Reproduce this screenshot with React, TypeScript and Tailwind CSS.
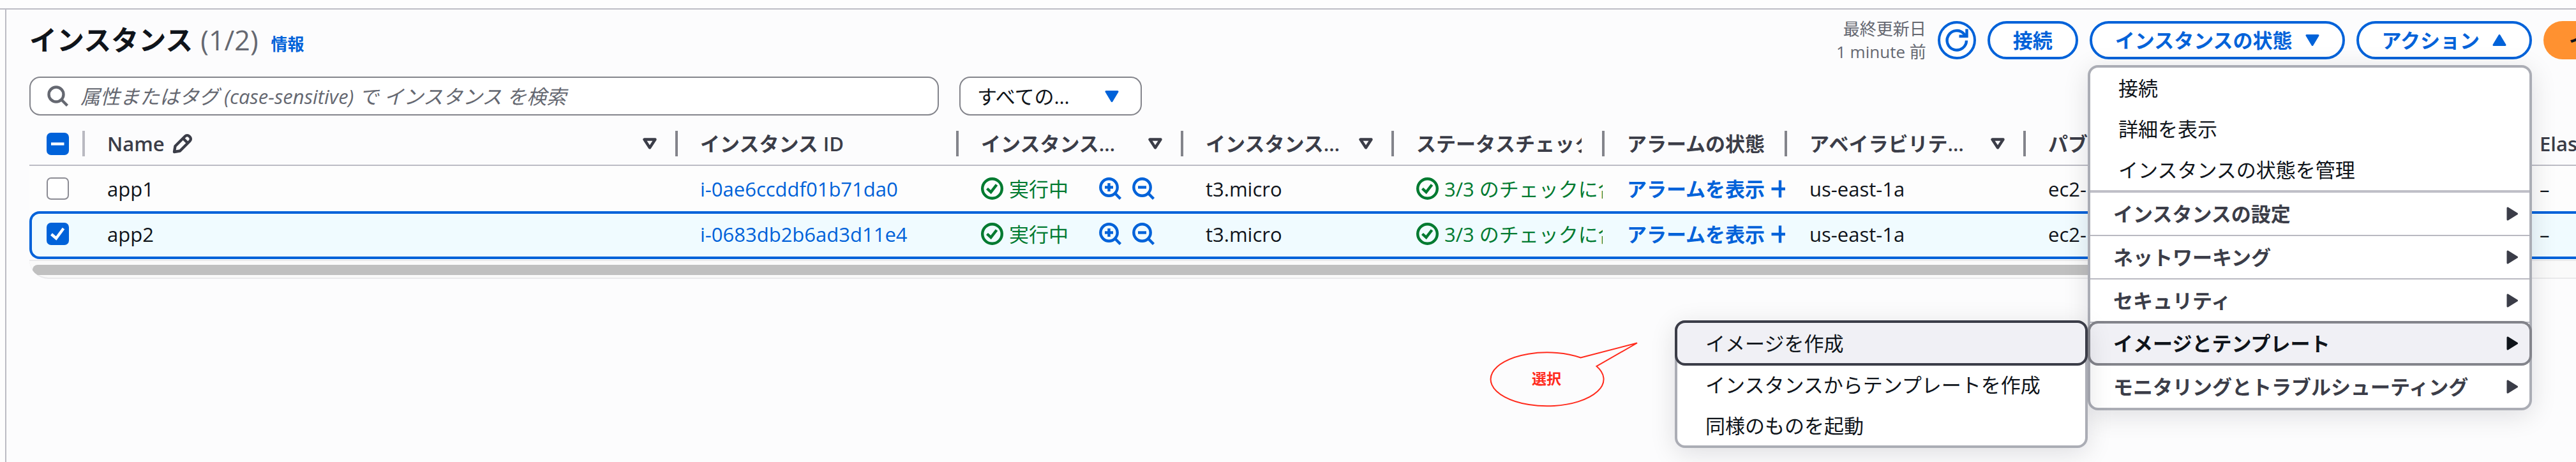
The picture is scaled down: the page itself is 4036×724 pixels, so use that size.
import type { ReactNode } from "react";

const instances = [
  { name: "app1", id: "i-0ae6ccddf01b71da0", selected: false },
  { name: "app2", id: "i-0683db2b6ad3d11e4", selected: true },
];

type Column = { label: string; width: string; filter?: boolean; edit?: boolean; last?: boolean };

const columns: Column[] = [
  { label: "Name", width: "", filter: true, edit: true },
  { label: "インスタンス ID", width: "w-[440px]" },
  { label: "インスタンス…", width: "w-[352px]", filter: true },
  { label: "インスタンス…", width: "w-[330px]", filter: true },
  { label: "ステータスチェック", width: "w-[330px]" },
  { label: "アラームの状態", width: "w-[286px]" },
  { label: "アベイラビリテ…", width: "w-[374px]", filter: true },
  { label: "パブ", width: "w-[770px]" },
  { label: "Elastic IP", width: "w-[92px]", last: true },
];

function Triangle({ className }: { className: string }) {
  return (
    <svg viewBox="0 0 22 18" className={className} aria-hidden="true">
      <path d="M2 1.5h18L11 16.5z" fill="currentColor" stroke="currentColor" strokeWidth="3" strokeLinejoin="round" />
    </svg>
  );
}

function FilterTriangle() {
  return (
    <svg viewBox="0 0 22 18" className="h-[18px] w-[22px]" aria-hidden="true">
      <path d="M2.5 2.5h17L11 15.5z" fill="none" stroke="currentColor" strokeWidth="4.4" strokeLinejoin="round" />
    </svg>
  );
}

function Pencil() {
  return (
    <svg viewBox="0 0 32 32" className="h-8 w-8" fill="none" stroke="currentColor" strokeWidth="4.4" strokeLinejoin="round" aria-hidden="true">
      <path d="M3 29l1.5-9L20 4.500a4.500 4.500 0 0 1 6.500 0l1 1a4.500 4.500 0 0 1 0 6.500L12 27.500z" />
      <path d="M17 8l7.500 7.500" />
    </svg>
  );
}

function StatusOk() {
  return (
    <svg viewBox="0 0 35 35" className="h-[35px] w-[35px] shrink-0" fill="none" stroke="currentColor" strokeWidth="4.400" aria-hidden="true">
      <circle cx="17.500" cy="17.500" r="15.300" />
      <path d="M9.500 17.500l6 5.500 9-11.500" />
    </svg>
  );
}

function Zoom({ plus }: { plus?: boolean }) {
  return (
    <svg viewBox="0 0 35 35" className="h-[35px] w-[35px]" fill="none" stroke="currentColor" strokeWidth="4.400" aria-hidden="true">
      <circle cx="15.500" cy="15.500" r="13.200" />
      <path d="M25 25l8.500 8.500" />
      <path d="M9 15.500h13" />
      {plus && <path d="M15.500 9v13" />}
    </svg>
  );
}

function Checkbox({ label, state }: { label: string; state: "on" | "off" | "mixed" }) {
  return (
    <span className="grid h-[35px] w-[35px]">
      <input
        type="checkbox"
        aria-label={label}
        defaultChecked={state !== "off"}
        className="col-start-1 row-start-1 h-[35px] w-[35px] appearance-none rounded-[7px] border-2 border-[#8c8c94] bg-white checked:border-[#0062d9] checked:bg-[#0062d9]"
      />
      {state !== "off" && (
        <svg viewBox="0 0 35 35" className="pointer-events-none z-10 col-start-1 row-start-1 h-[35px] w-[35px]" fill="none" stroke="#ffffff" strokeWidth="4.400" aria-hidden="true">
          {state === "mixed" ? <path d="M7 17.500h20.500" /> : <path d="M7.500 18l7.500 6.500L26.500 9" />}
        </svg>
      )}
    </span>
  );
}

function Cell({ children, selected }: { children: ReactNode; selected: boolean }) {
  return (
    <td className={selected ? "border-y-4 border-[#0062d9] p-0 pb-1" : "p-0"}>
      <div className="mr-[3px] flex h-[63px] items-center overflow-hidden pl-[35px] whitespace-nowrap">{children}</div>
    </td>
  );
}

const pill =
  "flex h-[60px] items-center gap-5 whitespace-nowrap rounded-full border-4 border-[#0062d9] bg-white px-9 font-semibold text-[#0062d9]";

function MenuGroup({ label }: { label: string }) {
  return (
    <li className="border-b-2 border-[#b9b9c1] last:border-b-0">
      <button type="button" className="flex h-[66px] w-full items-center justify-between pr-[18px] pl-9 font-semibold text-[#3b3d48]">
        {label}
        <Arrow />
      </button>
    </li>
  );
}

function Arrow() {
  return (
    <svg viewBox="0 0 18 22" className="h-[22px] w-[18px] shrink-0" aria-hidden="true">
      <path d="M2 2v18L16.500 11z" fill="currentColor" stroke="currentColor" strokeWidth="3" strokeLinejoin="round" />
    </svg>
  );
}

function Callout() {
  return (
    <div className="absolute top-[31px] right-full mr-[54px] h-[108px] w-[240px]">
      <svg viewBox="0 0 240 108" className="h-[108px] w-[240px]" fill="none" stroke="#ff2a1c" strokeWidth="2" aria-hidden="true">
        <path d="M146.500 27.500L235 4.500L171.500 41A88.500 42 0 1 1 146.500 27.500z" />
      </svg>
      <span className="absolute top-11 left-1 w-[178px] text-center text-[23px] leading-8 font-bold text-[#ff2a1c]">選択</span>
    </div>
  );
}

function SubMenu() {
  return (
    <div className="absolute -top-px right-full w-[647px]">
      <ul className="rounded-2xl border-4 border-[#abadb5] bg-white text-[#0f141a] shadow-[0_8px_40px_rgba(0,7,22,0.12)]">
        <li className="-mx-1 -mt-1 -mb-[3px]">
          <button type="button" className="flex h-[71px] w-full items-center rounded-2xl border-4 border-[#3b3d48] bg-[#f0f0f5] pl-11">
            イメージを作成
          </button>
        </li>
        <li>
          <button type="button" className="flex h-[65px] w-full items-center pl-11">インスタンスからテンプレートを作成</button>
        </li>
        <li>
          <button type="button" className="flex h-[63px] w-full items-center pl-11">同様のものを起動</button>
        </li>
      </ul>
      <Callout />
    </div>
  );
}

function ActionMenu() {
  return (
    <ul className="absolute top-full right-0 z-20 mt-[9px] w-[696px] rounded-2xl border-4 border-[#abadb5] bg-white text-[#0f141a] shadow-[0_8px_40px_rgba(0,7,22,0.12)]">
      <li>
        <button type="button" className="flex h-[63px] w-full items-center pl-11">接続</button>
      </li>
      <li>
        <button type="button" className="flex h-[65px] w-full items-center pl-11">詳細を表示</button>
      </li>
      <li className="border-b-4 border-[#bfbfc7]">
        <button type="button" className="flex h-16 w-full items-center pl-11">インスタンスの状態を管理</button>
      </li>
      <MenuGroup label="インスタンスの設定" />
      <MenuGroup label="ネットワーキング" />
      <MenuGroup label="セキュリティ" />
      <li className="relative z-10 -mx-1 -mt-[3px]">
        <button type="button" className="flex h-[70px] w-full items-center justify-between rounded-2xl border-4 border-[#83848b] bg-[#f0f0f5] pr-[18px] pl-9 font-semibold text-[#0f141a]">
          イメージとテンプレート
          <Arrow />
        </button>
        <SubMenu />
      </li>
      <MenuGroup label="モニタリングとトラブルシューティング" />
    </ul>
  );
}

function Header() {
  return (
    <header className="flex h-[60px] items-center justify-between">
      <h1 className="flex items-baseline text-[43px] leading-[48px] font-bold whitespace-nowrap text-[#0f141a]">
        インスタンス
        <span className="ml-3 font-medium text-[#656871]">(1/2)</span>
        <a href="#info" className="ml-5 text-[26px] leading-8 text-[#0062d9]">情報</a>
      </h1>
      <div className="flex shrink-0 items-center gap-[18px]">
        <p className="text-right text-[26px] leading-9 text-[#656871]">
          最終更新日
          <br />1 minute 前
        </p>
        <button type="button" aria-label="更新" className="grid h-[60px] w-[60px] place-items-center rounded-full border-4 border-[#0062d9] bg-white text-[#0062d9]">
          <svg viewBox="0 0 36 36" className="h-9 w-9" fill="none" stroke="currentColor" strokeWidth="4.400" aria-hidden="true">
            <path d="M33 18.500A15.200 15.200 0 1 1 29 8L32 11" />
            <path d="M33.500 0.500v11.200H21.500" />
          </svg>
        </button>
        <button type="button" className={pill}>接続</button>
        <button type="button" className={pill}>
          インスタンスの状態
          <Triangle className="h-[18px] w-[22px]" />
        </button>
        <div className="relative">
          <button type="button" aria-expanded="true" className={pill}>
            アクション
            <Triangle className="h-[18px] w-[22px] rotate-180" />
          </button>
          <ActionMenu />
        </div>
        <div className="w-[51px]">
          <button type="button" className="flex h-[60px] items-center rounded-full bg-[#ff9130] px-10 font-semibold whitespace-nowrap text-[#0f141a]">
            インスタンスを起動
          </button>
        </div>
      </div>
    </header>
  );
}

function Filters() {
  return (
    <div className="mt-[27px] flex gap-8">
      <label className="flex h-[61px] w-[1425px] items-center gap-[18px] rounded-[17px] border-2 border-[#83848b] bg-white pl-[26px] text-[#656871]">
        <svg viewBox="0 0 34 34" className="h-[34px] w-[34px]" fill="none" stroke="currentColor" strokeWidth="4.400" aria-hidden="true">
          <circle cx="14" cy="14" r="11.500" />
          <path d="M22 22l9.500 9.500" />
        </svg>
        <input
          type="search"
          aria-label="インスタンスを検索"
          placeholder="属性またはタグ (case-sensitive) で インスタンス を検索"
          className="min-w-0 flex-1 bg-transparent italic outline-none placeholder:text-[#656871]"
        />
      </label>
      <div className="grid h-[61px] w-[286px] items-center">
        <select
          aria-label="状態フィルター"
          className="col-start-1 row-start-1 h-[61px] w-full appearance-none rounded-[17px] border-2 border-[#83848b] bg-white pl-[26px] text-[#0f141a]"
        >
          <option>すべての…</option>
        </select>
        <span className="pointer-events-none z-10 col-start-1 row-start-1 mr-9 justify-self-end text-[#0062d9]">
          <Triangle className="h-[18px] w-[22px]" />
        </span>
      </div>
    </div>
  );
}

function InstanceTable() {
  return (
    <table className="mt-[11px] w-full table-fixed border-separate border-spacing-0 text-left">
      <thead className="text-[#3b3d48]">
        <tr>
          <th className="w-[87px] border-b-2 border-[#bcbcc4] p-0">
            <div className="flex h-[66px] items-center justify-between pl-[27px]">
              <Checkbox label="すべて選択" state="mixed" />
              <span className="h-10 w-1 bg-[#b9b9c1]" />
            </div>
          </th>
          {columns.map((c, i) => (
            <th key={i} className={`${c.width} border-b-2 border-[#bcbcc4] p-0 font-semibold`}>
              <div className="flex h-[66px] items-center pl-[35px]">
                <span className={c.filter || c.last ? "flex flex-1 items-center gap-3 whitespace-nowrap" : "mr-8 min-w-0 flex-1 overflow-hidden whitespace-nowrap"}>
                  {c.label}
                  {c.edit && <Pencil />}
                </span>
                {c.filter && (
                  <span className="mr-[29px]">
                    <FilterTriangle />
                  </span>
                )}
                {!c.last && <span className="h-10 w-1 shrink-0 bg-[#83848b]" />}
              </div>
            </th>
          ))}
        </tr>
      </thead>
      <tbody className="text-[#0f141a]">
        {instances.map((row) => (
          <tr key={row.id} className={row.selected ? "h-[75px] bg-[#f0fbff]" : "h-[71px] bg-[#fdfdfd]"}>
            <td className={row.selected ? "rounded-l-2xl border-y-4 border-l-4 border-[#0062d9] p-0 pb-1 pl-[23px]" : "p-0 pl-[27px]"}>
              <Checkbox label={row.name} state={row.selected ? "on" : "off"} />
            </td>
            <Cell selected={row.selected}>{row.name}</Cell>
            <Cell selected={row.selected}>
              <a href={`#${row.id}`} className="text-[#0062d9]">{row.id}</a>
            </Cell>
            <Cell selected={row.selected}>
              <span className="flex items-center gap-[9px] text-[#007a30]">
                <StatusOk />
                実行中
              </span>
              <span className="ml-12 flex gap-[17px] text-[#0062d9]">
                <button type="button" aria-label="フィルターに追加">
                  <Zoom plus />
                </button>
                <button type="button" aria-label="フィルターから除外">
                  <Zoom />
                </button>
              </span>
            </Cell>
            <Cell selected={row.selected}>t3.micro</Cell>
            <Cell selected={row.selected}>
              <span className="flex items-center gap-[9px] text-[#007a30]">
                <StatusOk />
                3/3 のチェックに合格
              </span>
            </Cell>
            <Cell selected={row.selected}>
              <a href="#alarms" className="flex items-center gap-[10px] font-semibold text-[#0062d9]">
                アラームを表示
                <svg viewBox="0 0 28 28" className="h-7 w-7 shrink-0" stroke="currentColor" strokeWidth="4.400" aria-hidden="true">
                  <path d="M14 0.500v27M0.500 14h27" />
                </svg>
              </a>
            </Cell>
            <Cell selected={row.selected}>us-east-1a</Cell>
            <Cell selected={row.selected}>ec2-</Cell>
            <Cell selected={row.selected}>–</Cell>
          </tr>
        ))}
      </tbody>
    </table>
  );
}

export default function App() {
  return (
    <div className="flex min-h-screen flex-col overflow-hidden bg-[#fdfdfd] pt-[13px] font-['Open_Sans','Noto_Sans_CJK_JP',sans-serif] text-[31px] leading-10">
      <main className="flex flex-1 flex-col border-t-2 border-[#bcbcc4]">
        <section className="ml-2 flex-1 border-l-2 border-[#bcbcc4] bg-[#fcfcfd] pt-[18px] pl-9">
          <Header />
          <Filters />
          <InstanceTable />
          <div className="mt-px h-[30px] overflow-hidden rounded-bl-[30px] border-y-2 border-[#e9e9eb] bg-[#fafafa] py-[6px] pl-[5px]">
            <div className="h-4 w-[3500px] rounded-full bg-[#c0c0c0]" />
          </div>
        </section>
      </main>
    </div>
  );
}
